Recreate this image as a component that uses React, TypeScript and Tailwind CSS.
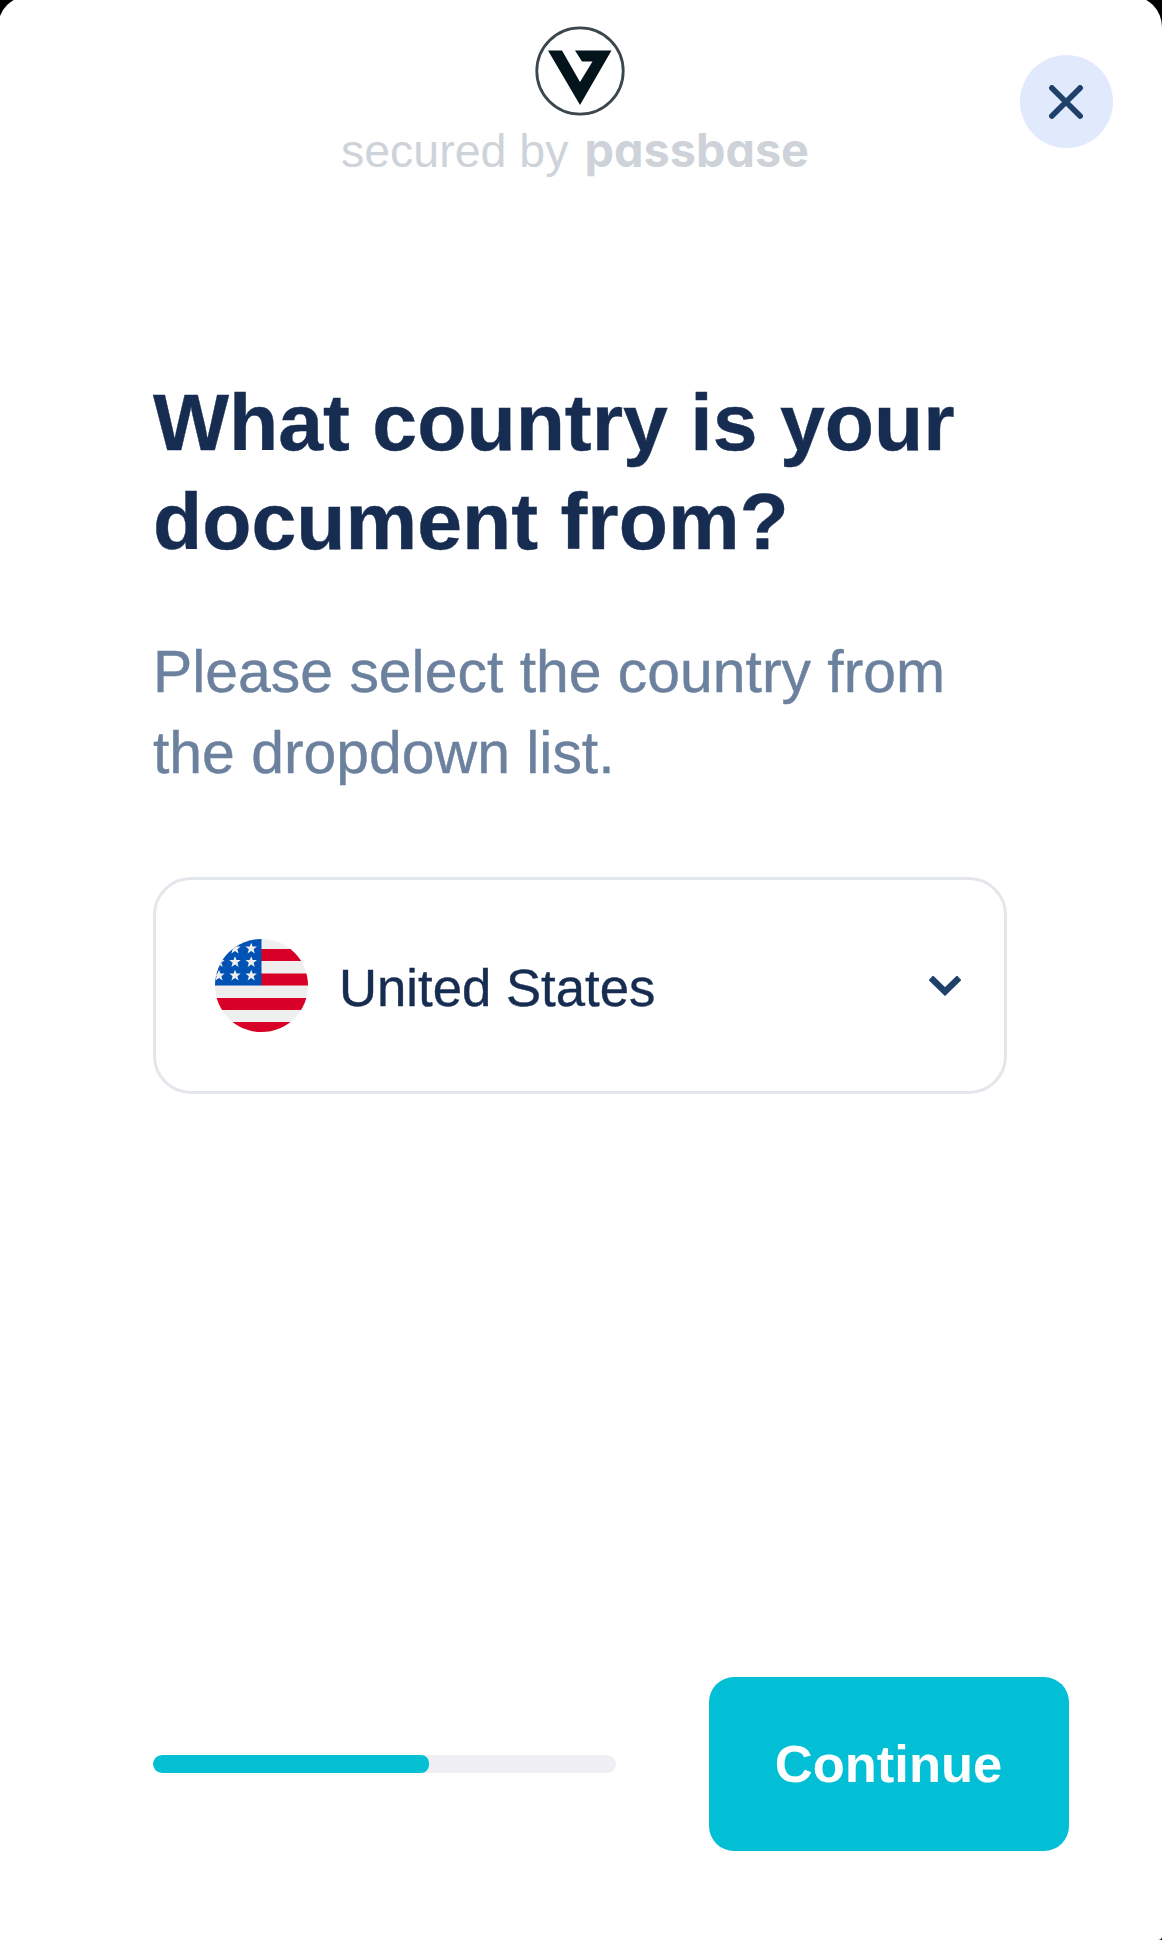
const star = "M0-5.8 1.5-1.9 5.7-1.9 2.4.8 3.6 4.9 0 2.5-3.6 4.9-2.4.8-5.7-1.9-1.5-1.9Z";
const stars = [[20, 9.5], [36.2, 9.5], [20, 23], [36.2, 23], [4, 36.5], [20, 36.5], [36.2, 36.5], [4, 23]];

function BrandMark() {
  return (
    <svg className="mr-[2px] block h-[90px] w-[90px]" viewBox="0 0 90 90">
      <circle cx="45" cy="45" r="43.2" fill="#fff" stroke="#3b474d" strokeWidth="2.8" />
      <path d="M13 24.5H27L45 56 57.5 35.5H47L40 24.5H76.5L45 79Z" fill="#04141b" />
    </svg>
  );
}

function Flag() {
  return (
    <svg className="block h-[93px] w-[93px] shrink-0" viewBox="0 0 93 93">
      <defs>
        <clipPath id="round"><circle cx="46.5" cy="46.5" r="46.5" /></clipPath>
      </defs>
      <g clipPath="url(#round)">
        <rect width="93" height="93" fill="#efefef" />
        <path d="M46 10h47v12H46zM46 34.5h47v12H46zM0 59h93v12H0zM0 83h93v12H0z" fill="#d80027" />
        <rect width="46.5" height="46.5" fill="#0052b4" />
        {stars.map(([x, y]) => (
          <path key={`${x}-${y}`} d={star} transform={`translate(${x} ${y})`} fill="#efefef" />
        ))}
      </g>
    </svg>
  );
}

export default function App() {
  return (
    <div className="flex h-[1940px] w-[1162px] overflow-hidden bg-black font-['Liberation_Sans',sans-serif]">
      <main className="relative -ml-[2px] -mt-[4px] flex h-[1944px] w-[1164px] shrink-0 flex-col rounded-t-[31px] rounded-br-[4px] bg-white pl-[2px] pt-[30px]">
        <header className="flex h-[346px] shrink-0 flex-col items-center">
          <BrandMark />
          <div className="mt-[7px] flex h-[54px] w-full items-baseline pl-[341px] text-[46.5px] leading-[54px] text-[#ced3d9]">
            <span className="whitespace-pre">secured by</span>
            <span className="ml-[16px] font-['Inter',sans-serif] text-[46.8px] font-bold leading-[54px] [font-feature-settings:'cv11']">passbase</span>
          </div>
        </header>
        <button aria-label="Close" className="absolute right-[49px] top-[59px] flex size-[93px] items-center justify-center rounded-full bg-[#e1eafd]">
          <svg className="mr-px size-[34px]" viewBox="0 0 34 34" fill="none" stroke="#1f4068" strokeWidth="5.6" strokeLinecap="round">
            <path d="M2.9 2.9 31.1 31.1M31.1 2.9 2.9 31.1" />
          </svg>
        </button>
        <section className="pl-[153px]">
          <h1 className="pt-px text-[80.6px] font-bold leading-[99.2px] text-[#162c50] [-webkit-text-stroke:0.4px_#162c50]">
            What country is your<br />document from?
          </h1>
          <p className="mt-[61px] text-[58.9px] leading-[80.6px] text-[#6b819e] [-webkit-text-stroke:0.4px_#6b819e]">
            Please select the country from<br />the dropdown list.
          </p>
          <button className="mt-[83px] flex h-[217px] w-[854px] items-center rounded-[38px] border-[3px] border-[#e3e6eb] pl-[59px] pr-[43px] text-left">
            <Flag />
            <span className="ml-[31px] mt-[5px] flex-1 text-[52.7px] leading-[60px] text-[#162c50] [-webkit-text-stroke:0.4px_#162c50]">United States</span>
            <svg className="mt-px h-[20px] w-[32px]" viewBox="0 0 32 20" fill="none" stroke="#1f4068" strokeWidth="6.4">
              <path d="M1.8 1.8 16 15.6 30.2 1.8" />
            </svg>
          </button>
        </section>
        <footer className="mb-[89px] mt-auto flex h-[174px] items-center justify-between pl-[153px] pr-[93px]">
          <div className="h-[18px] w-[462.5px] overflow-hidden rounded-full bg-[#f0eff5]">
            <div className="h-full w-[276px] rounded-[8px] bg-[#05bfd3]" />
          </div>
          <button className="h-[174px] w-[360px] rounded-[25px] bg-[#03bfd6] pr-px text-[52.5px] font-bold text-white">Continue</button>
        </footer>
      </main>
    </div>
  );
}
